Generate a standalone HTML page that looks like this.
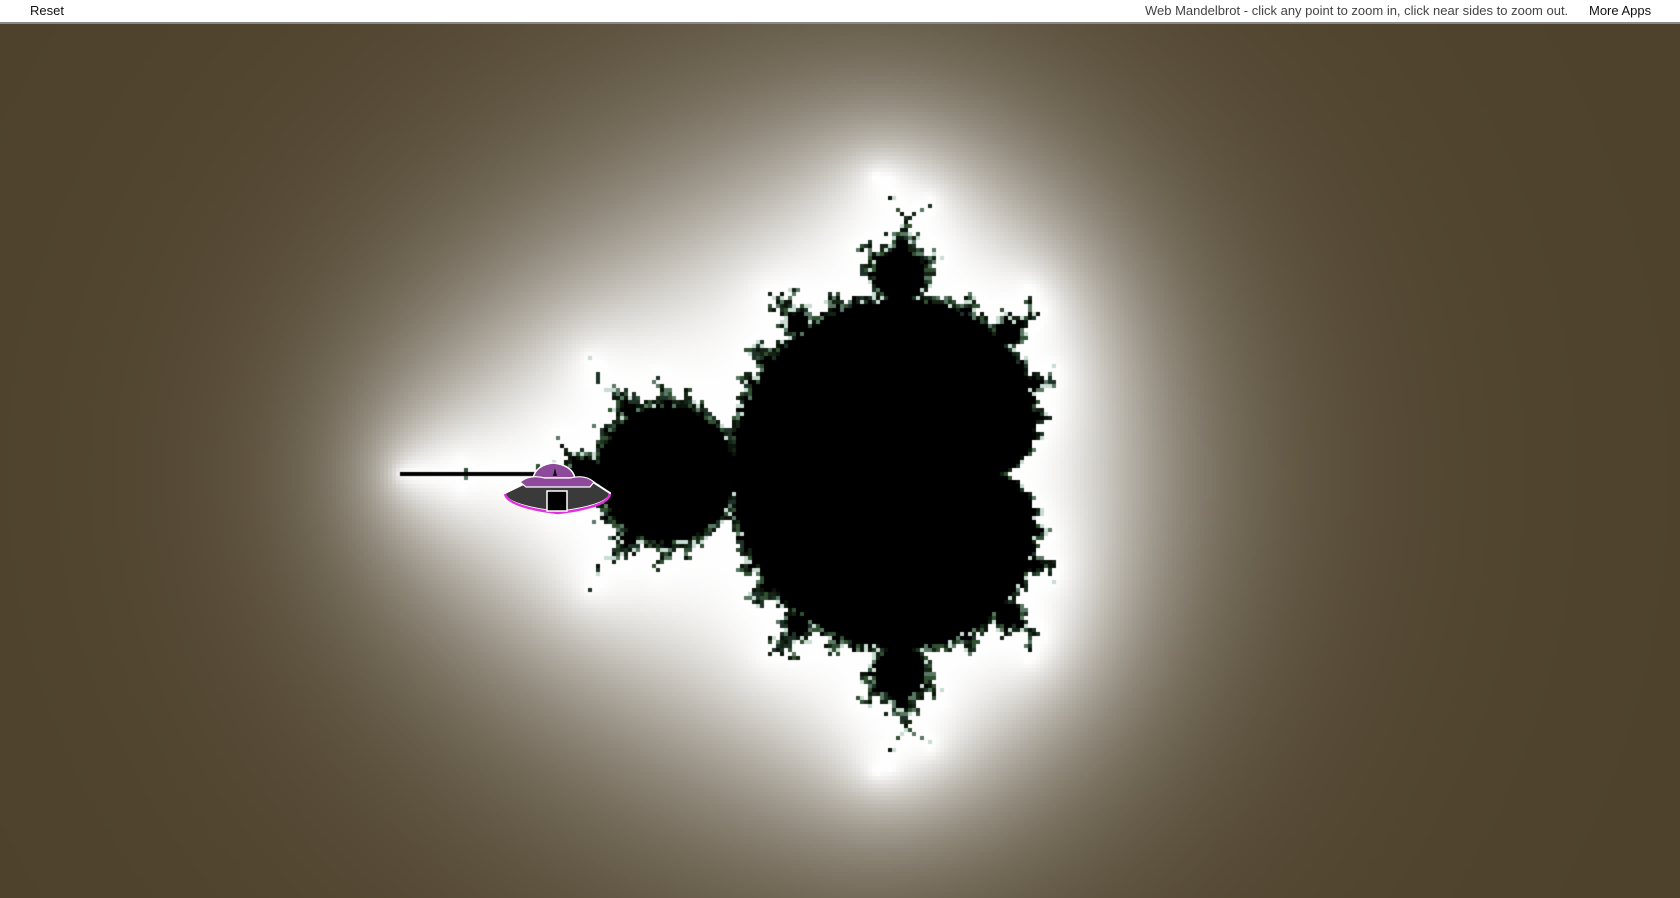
<!DOCTYPE html>
<html><head><meta charset="utf-8"><style>
html,body{margin:0;padding:0;width:1680px;height:898px;overflow:hidden;background:#4f442e;font-family:"Liberation Sans",sans-serif}
#bar{position:absolute;left:0;top:0;width:1680px;height:22px;background:#fff;border-bottom:2px solid #8a8a8a;font-size:13px}
#bar span{position:absolute;top:3px}
canvas{position:absolute;left:0;top:24px}
svg{position:absolute;left:0;top:0}
</style></head><body>
<div id="bar"><span style="left:30px;color:#111">Reset</span><span style="left:1145px;color:#444">Web Mandelbrot - click any point to zoom in, click near sides to zoom out.</span><span style="left:1589px;color:#111">More Apps</span></div>
<canvas id="c" width="1680" height="874"></canvas>
<svg width="1680" height="898">
<path d="M505 493 L532 480 L590 480 L610 493 Q610 505 558 512 Q505 505 505 493Z" fill="#3a3a3a" stroke="#fff" stroke-width="2"/>
<path d="M505 494 Q508 507 558 513 Q608 507 610 494" fill="none" stroke="#e030e0" stroke-width="2.5"/>
<path d="M533 478 Q536 465 553 463 Q572 465 575 478Z" fill="#8e4a9a" stroke="#fff" stroke-width="1.5"/>
<path d="M520 482 Q530 474 545 478 L570 478 Q585 474 594 482 L590 487 L526 487Z" fill="#8e4a9a" stroke="#fff" stroke-width="1.2"/>
<rect x="547" y="491" width="20" height="20" fill="#000" stroke="#fff" stroke-width="1.5"/>
<path d="M553 476 L555 468 L557 476Z" fill="#111"/>
</svg>
<script>
var cv=document.getElementById('c'),ctx=cv.getContext('2d');
var W=1680,H=874,B=4,S=266.7,CX=1000,CY=474-24;
var pal=[[20,35,20],[200,220,210],[50,80,50],[10,20,10],[90,120,100],[30,50,40]];
for(var py=0;py<H;py+=B){for(var px=0;px<W;px+=B){
var cr=0.25+(px+B/2-CX)/S,ci=(py+B/2-CY)/S;
var zr=0,zi=0,n=0,M=200;
while(n<M&&zr*zr+zi*zi<1e6){var t=zr*zr-zi*zi+cr;zi=2*zr*zi+ci;zr=t;n++;}
var r,g,b;
if(n>=M){r=g=b=0;}
else{
var G=Math.log(Math.sqrt(zr*zr+zi*zi))/Math.pow(2,n);
var f=Math.exp(-Math.pow(G/0.18,1.4));
r=78+(255-78)*f;g=66+(255-66)*f;b=44+(255-44)*f;
if(n>20){var p=pal[(n*7+px*3+py)%6];r=p[0];g=p[1];b=p[2];}
}
ctx.fillStyle='rgb('+(r|0)+','+(g|0)+','+(b|0)+')';ctx.fillRect(px,py,B,B);
}}
</script>
</body></html>
